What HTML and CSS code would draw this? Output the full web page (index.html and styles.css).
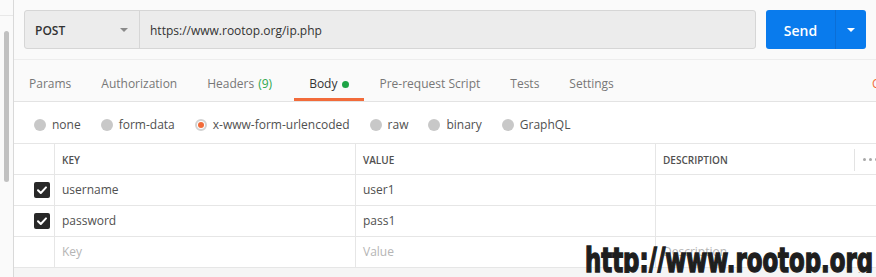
FILE: index.html
```html
<!DOCTYPE html>
<html>
<head>
<meta charset="utf-8">
<link rel="stylesheet" href="styles.css">
</head>
<body>
<div class="app">
  <aside class="side">
    <div class="side-top"></div>
    <div class="thumb"></div>
  </aside>
  <main class="main">
    <div class="url-row">
      <div class="url-box">
        <div class="method"><span>POST</span><span class="caret"></span></div>
        <div class="url">https://www.rootop.org/ip.php</div>
      </div>
      <div class="send">
        <span class="send-label">Send</span>
        <span class="send-drop"><span class="caret caret-white"></span></span>
      </div>
    </div>
    <nav class="tabs">
      <div class="tab">Params</div>
      <div class="tab">Authorization</div>
      <div class="tab">Headers<span class="count">(9)</span></div>
      <div class="tab active">Body<span class="dot"></span></div>
      <div class="tab">Pre-request Script</div>
      <div class="tab">Tests</div>
      <div class="tab">Settings</div>
      <div class="tab-right"><span class="cookies">Cookies</span></div>
    </nav>
    <div class="body-types">
      <label class="radio-opt"><span class="radio"></span>none</label>
      <label class="radio-opt"><span class="radio"></span>form-data</label>
      <label class="radio-opt"><span class="radio selected"></span>x-www-form-urlencoded</label>
      <label class="radio-opt"><span class="radio"></span>raw</label>
      <label class="radio-opt"><span class="radio"></span>binary</label>
      <label class="radio-opt"><span class="radio"></span>GraphQL</label>
    </div>
    <div class="table">
      <div class="row head">
        <div class="cell chk"></div>
        <div class="cell">KEY</div>
        <div class="cell">VALUE</div>
        <div class="cell last desc-head">
          <span class="desc-title">DESCRIPTION</span>
          <span class="more"><i></i><i></i><i></i></span>
        </div>
      </div>
      <div class="row">
        <div class="cell chk"><span class="check"><svg width="16" height="16" viewBox="0 0 16 16"><polyline points="4,8.2 6.8,11 12,5.4" fill="none" stroke="#fff" stroke-width="2" stroke-linecap="round" stroke-linejoin="round"/></svg></span></div>
        <div class="cell">username</div>
        <div class="cell">user1</div>
        <div class="cell last"></div>
      </div>
      <div class="row">
        <div class="cell chk"><span class="check"><svg width="16" height="16" viewBox="0 0 16 16"><polyline points="4,8.2 6.8,11 12,5.4" fill="none" stroke="#fff" stroke-width="2" stroke-linecap="round" stroke-linejoin="round"/></svg></span></div>
        <div class="cell">password</div>
        <div class="cell">pass1</div>
        <div class="cell last"></div>
      </div>
      <div class="row">
        <div class="cell chk"></div>
        <div class="cell ph">Key</div>
        <div class="cell ph">Value</div>
        <div class="cell last ph">Description</div>
      </div>
    </div>
    <div class="filler"></div>
  </main>
  <div class="watermark">
    <svg width="292" height="29" viewBox="0 0 292 29"><text x="1" y="28" textLength="288" lengthAdjust="spacingAndGlyphs">http://www.rootop.org</text></svg>
  </div>
</div>
</body>
</html>
```
FILE: styles.css
```css
html, body {
  margin: 0;
  padding: 0;
}
body {
  width: 876px;
  height: 277px;
  overflow: hidden;
  font-family: "Open Sans", "Noto Sans", sans-serif;
  font-size: 12px;
  background: #fafafa;
  color: #505050;
}
.app {
  position: relative;
  display: flex;
  height: 277px;
}
.side {
  width: 13px;
  flex-shrink: 0;
  border-right: 1px solid #d9d9d9;
  background: #fafafa;
}
.side-top {
  height: 15px;
  border-bottom: 1px solid #e8e8e8;
}
.thumb {
  margin: 15px 0 0 4px;
  width: 5px;
  height: 151px;
  border-radius: 3px;
  background: #c1c1c1;
}
.main {
  flex: 1;
  min-width: 0;
  display: flex;
  flex-direction: column;
}
.url-row {
  display: flex;
  gap: 10px;
  padding: 10px 10px 0;
  height: 39px;
}
.url-box {
  flex: 1;
  display: flex;
  background: #ececec;
  border: 1px solid #d6d6d6;
  border-radius: 3px;
  color: #333;
}
.method {
  box-sizing: border-box;
  width: 115px;
  display: flex;
  align-items: center;
  justify-content: space-between;
  padding: 1px 11px 0 10px;
  border-right: 1px solid #d6d6d6;
  font-weight: 600;
  color: #333;
}
.caret {
  width: 0;
  height: 0;
  border-left: 4px solid transparent;
  border-right: 4px solid transparent;
  border-top: 4px solid #8a8a8a;
}
.caret-white {
  border-top-color: #fff;
}
.url {
  display: flex;
  align-items: center;
  padding: 1px 0 0 10px;
  color: #333;
}
.send {
  width: 100px;
  flex-shrink: 0;
  display: flex;
  background: #097bed;
  border-radius: 3px;
  color: #fff;
}
.send-label {
  flex: 1;
  display: flex;
  align-items: center;
  justify-content: center;
  padding-top: 1px;
  font-size: 14px;
  font-weight: 600;
}
.send-drop {
  width: 30px;
  display: flex;
  align-items: center;
  justify-content: center;
  border-left: 1px solid #0b6ed6;
}
.tabs {
  margin-top: 10px;
  display: flex;
  height: 41px;
  border-top: 1px solid #ededed;
  border-bottom: 1px solid #e3e3e3;
  white-space: nowrap;
  overflow: hidden;
}
.tab {
  box-sizing: border-box;
  height: 41px;
  padding: 16px 15px 0;
  line-height: 16px;
  border-bottom: 3px solid transparent;
  color: #777;
  display: flex;
  align-items: flex-start;
  flex-shrink: 0;
}
.tab.active {
  color: #333;
  border-bottom-color: #f26b3a;
}
.count {
  color: #2fa84f;
  margin-left: 4px;
  margin-right: 7px;
}
.dot {
  width: 7px;
  height: 7px;
  border-radius: 50%;
  background: #1ea446;
  margin: 5px 0 0 5px;
}
.tab-right {
  margin-left: auto;
  width: 4px;
  flex-shrink: 0;
  padding-top: 16px;
  line-height: 16px;
}
.cookies {
  color: #f26b3a;
}
.body-types {
  display: flex;
  align-items: center;
  height: 16px;
  padding: 15px 20px 10px;
  line-height: 16px;
  background: #fff;
}
.radio-opt {
  display: flex;
  align-items: center;
  gap: 6px;
  margin-right: 20px;
  color: #505050;
}
.radio {
  box-sizing: border-box;
  width: 12px;
  height: 12px;
  border-radius: 50%;
  background: #c8c8c8;
  display: flex;
  align-items: center;
  justify-content: center;
  margin-top: -1px;
}
.radio.selected {
  background: #fff;
  border: 2px solid #d2d2d2;
}
.radio.selected::after {
  content: "";
  width: 6px;
  height: 6px;
  border-radius: 50%;
  background: #f26b3a;
}
.table {
  border-top: 1px solid #e6e6e6;
  background: #fff;
}
.row {
  display: grid;
  grid-template-columns: 41px 301px 300px 1fr;
  box-sizing: border-box;
  height: 31px;
  border-bottom: 1px solid #e6e6e6;
}
.cell {
  box-sizing: border-box;
  display: flex;
  align-items: center;
  padding-left: 7px;
  border-right: 1px solid #e6e6e6;
  line-height: 16px;
  color: #505050;
  white-space: nowrap;
  overflow: hidden;
}
.cell.last {
  border-right: none;
  padding-right: 0;
}
.cell.chk {
  padding-left: 20px;
}
.head .cell {
  font-size: 10px;
  font-weight: 600;
  line-height: 14px;
  color: #505050;
  padding-top: 1px;
}
.desc-head {
  display: flex;
}
.desc-title {
  flex: 1;
}
.more {
  flex-shrink: 0;
  box-sizing: border-box;
  width: 22px;
  height: 22px;
  border-left: 1px solid #e3e3e3;
  padding-left: 8px;
  display: flex;
  align-items: center;
  gap: 3px;
}
.more i {
  flex-shrink: 0;
  width: 3px;
  height: 3px;
  border-radius: 50%;
  background: #a8a8a8;
}
.check {
  width: 16px;
  height: 16px;
  border-radius: 2px;
  background: #282828;
  display: block;
}
.check svg {
  display: block;
}
.ph {
  color: #b5b5b5;
}
.filler {
  flex: 1;
  background: #f5f5f5;
}
.watermark {
  position: absolute;
  left: 584px;
  top: 244px;
  height: 29px;
  overflow: hidden;
}
.watermark svg {
  display: block;
}
.watermark text {
  font-family: "DejaVu Sans Condensed", "DejaVu Sans", sans-serif;
  font-weight: bold;
  font-stretch: condensed;
  font-size: 33px;
  fill: #1e1e1e;
  stroke: #1e1e1e;
  stroke-width: 1.4px;
}
```
